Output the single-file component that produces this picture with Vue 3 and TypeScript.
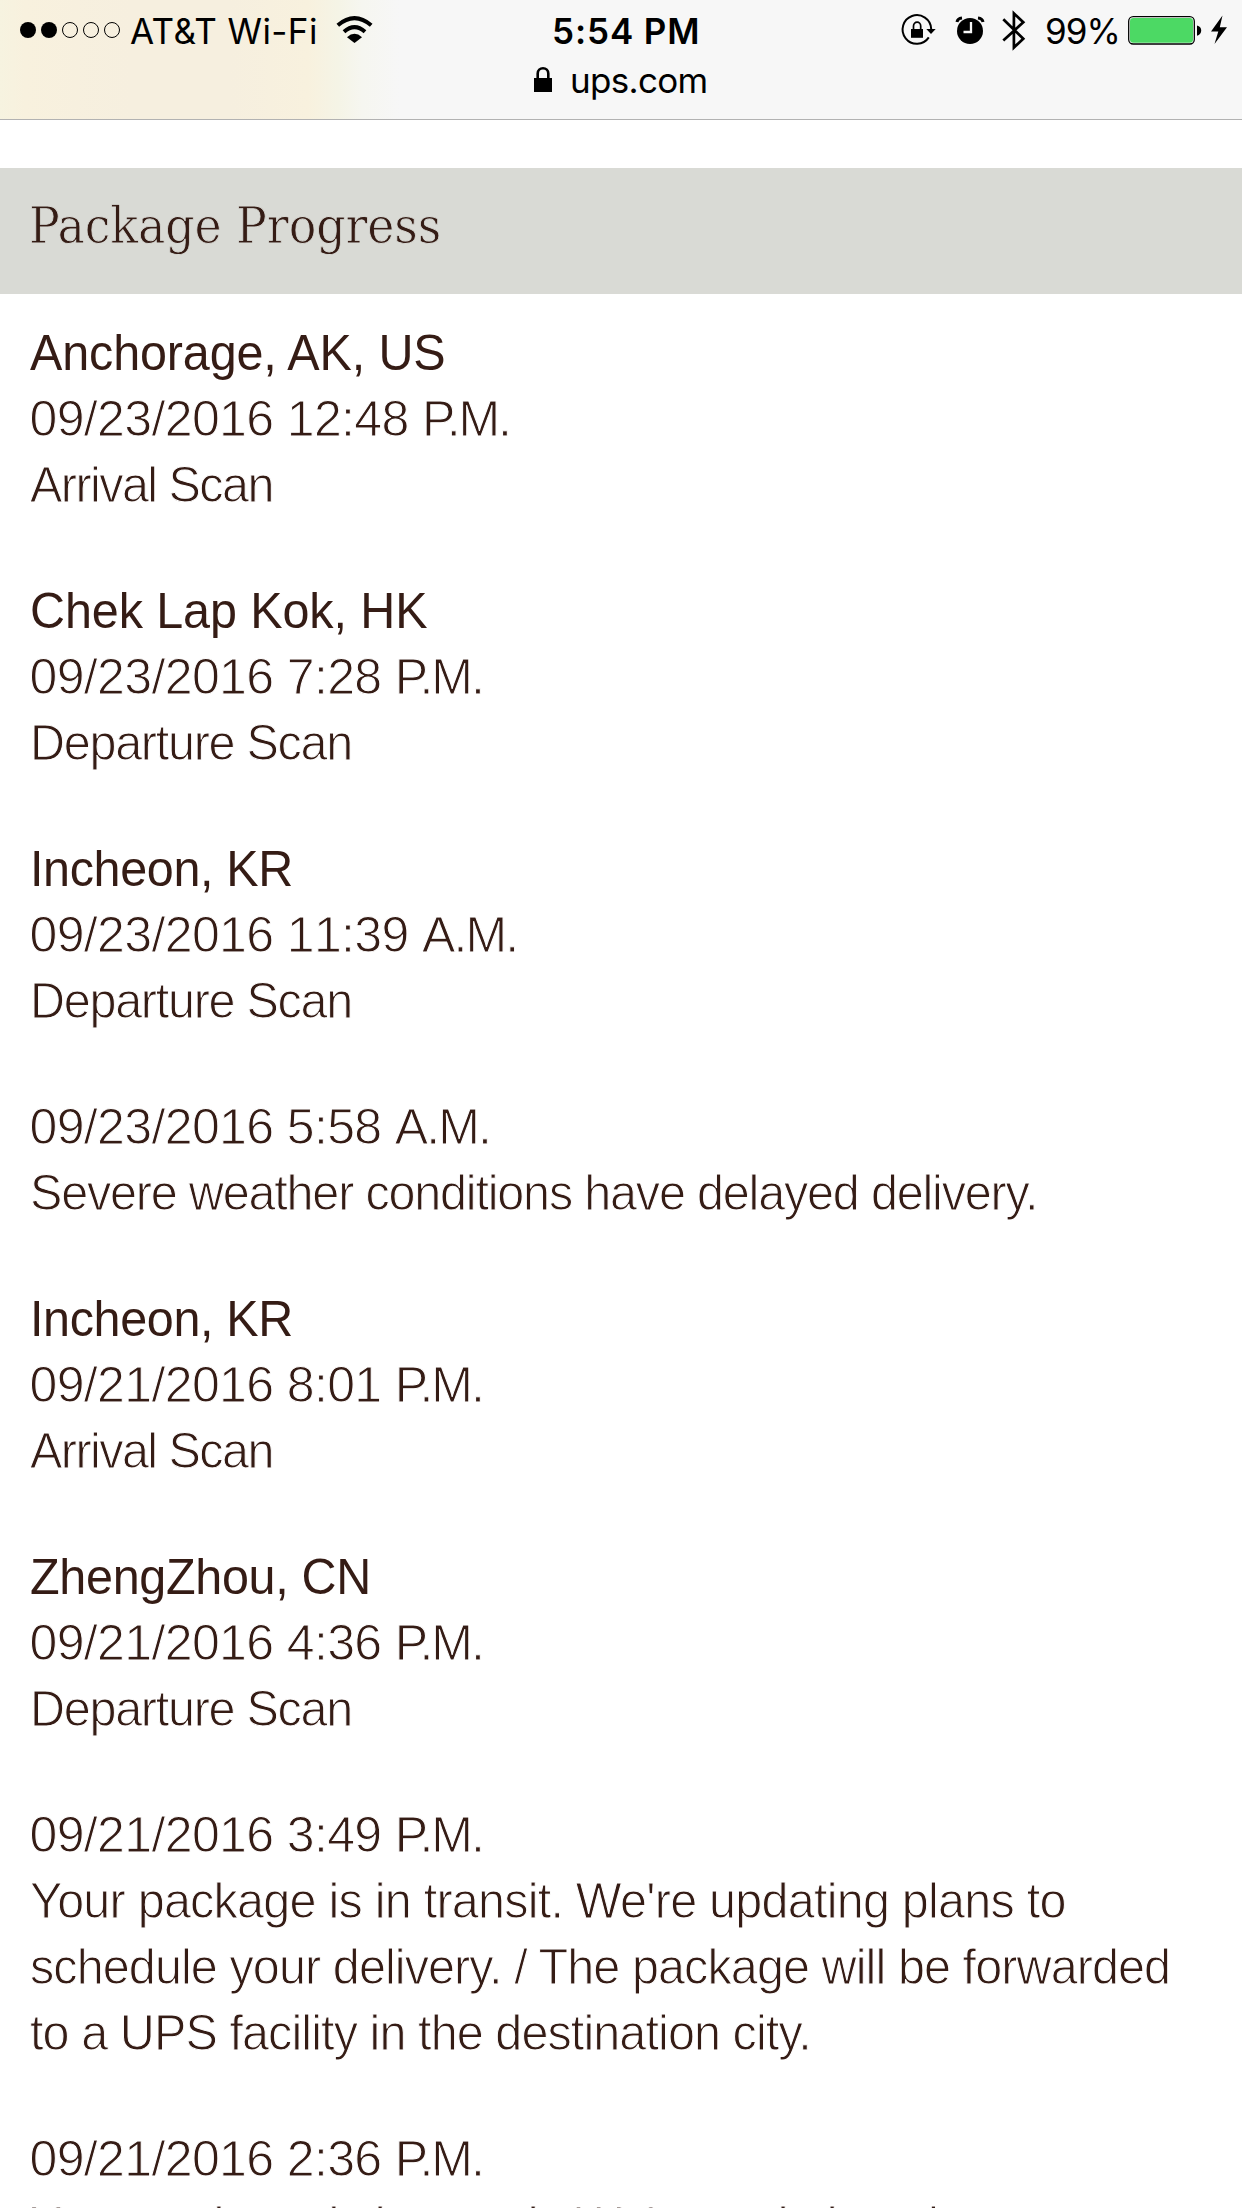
<script setup lang="ts">
interface TextLine {
  text: string
  tracking: number
}

interface ScanEvent {
  place?: TextLine
  date: string
  time: string
  meridiem: 'A.M.' | 'P.M.'
  details: TextLine[]
}

const arrival: TextLine = { text: 'Arrival Scan', tracking: -1.6 }
const departure: TextLine = { text: 'Departure Scan', tracking: -1.31 }
const incheon: TextLine = { text: 'Incheon, KR', tracking: -0.38 }
const inTransit: TextLine = { text: "Your package is in transit. We're updating plans to", tracking: -0.78 }

const events: ScanEvent[] = [
  {
    place: { text: 'Anchorage, AK, US', tracking: -0.14 },
    date: '09/23/2016',
    time: '12:48',
    meridiem: 'P.M.',
    details: [arrival],
  },
  {
    place: { text: 'Chek Lap Kok, HK', tracking: -0.1 },
    date: '09/23/2016',
    time: '7:28',
    meridiem: 'P.M.',
    details: [departure],
  },
  {
    place: incheon,
    date: '09/23/2016',
    time: '11:39',
    meridiem: 'A.M.',
    details: [departure],
  },
  {
    date: '09/23/2016',
    time: '5:58',
    meridiem: 'A.M.',
    details: [{ text: 'Severe weather conditions have delayed delivery.', tracking: -1.22 }],
  },
  {
    place: incheon,
    date: '09/21/2016',
    time: '8:01',
    meridiem: 'P.M.',
    details: [arrival],
  },
  {
    place: { text: 'ZhengZhou, CN', tracking: -0.32 },
    date: '09/21/2016',
    time: '4:36',
    meridiem: 'P.M.',
    details: [departure],
  },
  {
    date: '09/21/2016',
    time: '3:49',
    meridiem: 'P.M.',
    details: [
      inTransit,
      { text: 'schedule your delivery. / The package will be forwarded', tracking: -0.93 },
      { text: 'to a UPS facility in the destination city.', tracking: -0.93 },
    ],
  },
  {
    date: '09/21/2016',
    time: '2:36',
    meridiem: 'P.M.',
    details: [inTransit],
  },
]
</script>

<template>
  <div class="screen">
    <header class="chrome">
      <div class="status">
        <div class="group">
          <svg class="dots" width="100" height="20" viewBox="20 20 100 20">
            <circle cx="28" cy="30" r="8" />
            <circle cx="49" cy="30" r="8" />
            <g fill="none" stroke="#000" stroke-width="1">
              <circle cx="70" cy="30" r="7.5" />
              <circle cx="91" cy="30" r="7.5" />
              <circle cx="112" cy="30" r="7.5" />
            </g>
          </svg>
          <span class="carrier">AT&amp;T Wi-Fi</span>
          <svg width="40" height="60" viewBox="335 0 40 60">
            <g fill="none" stroke="#000" stroke-width="4">
              <path d="M337.8 25.3Q354.5 11 371.2 25.3" />
              <path d="M344 31.8Q354.5 22.5 365 31.8" />
            </g>
            <path d="M347 37.2Q354.5 30.5 362 37.2L354.5 43z" />
          </svg>
        </div>
        <div class="group">
          <span class="time">5:54 PM</span>
        </div>
        <div class="group">
          <svg width="140" height="60" viewBox="900 0 140 60">
            <path d="M928.8 37.4A14.3 14.3 0 1 1 931.2 29" fill="none" stroke="#000" stroke-width="2" />
            <path d="M926.3 29h9.4l-4.7 5z" />
            <path d="M911 29h12v8.8h-12z" />
            <path d="M913.5 30v-4a3.6 3.9 0 0 1 7.2 0v4" fill="none" stroke="#000" stroke-width="1.7" />
            <circle cx="970" cy="31" r="13" />
            <path d="M971 22v10h-7.5" fill="none" stroke="#f7f7f7" stroke-width="2.3" />
            <path d="M957 22Q957.5 18.5 962 18M983 22Q982.5 18.5 978 18" fill="none" stroke="#000" stroke-width="3" />
            <path d="M1003.3 19.2L1023.3 38.7L1013.9 47.6V13.4L1023.3 22.2L1003.3 40.6" fill="none" stroke="#000" stroke-width="2.7" />
          </svg>
          <span class="percent">99%</span>
          <svg width="104" height="60" viewBox="1126 0 104 60">
            <rect x="1128.7" y="16.7" width="65.6" height="27.3" rx="4.5" fill="#fff" stroke="#000" stroke-width="1.3" />
            <rect x="1130" y="18" width="63" height="24.7" rx="3.2" fill="#4cd964" />
            <path d="M1197 25.5q4.2 1 4.2 5t-4.2 5.2z" />
            <path d="M1222.5 15.5L1211 31.5h7.3L1214.5 44L1227 27.2h-7.2z" />
          </svg>
        </div>
      </div>
      <div class="address">
        <svg width="20" height="28" viewBox="533 66 20 28">
          <path d="M534 78h18v14h-18z" />
          <path d="M537.7 79v-5.5a5.3 5.3 0 0 1 10.6 0v5.5" fill="none" stroke="#000" stroke-width="2.6" />
        </svg>
        <span class="host">ups.com</span>
      </div>
    </header>

    <main>
      <h1 class="heading">Package Progress</h1>
      <section v-for="(event, i) in events" :key="i" class="event">
        <p v-if="event.place" class="place" :style="{ letterSpacing: event.place.tracking + 'px' }">{{ event.place.text }}</p>
        <p class="stamp">
          <span class="digits">{{ event.date }} {{ event.time }}&nbsp;</span><span :class="event.meridiem === 'P.M.' ? 'pm' : 'am'">{{ event.meridiem }}</span>
        </p>
        <p v-for="(line, j) in event.details" :key="j" class="detail" :style="{ letterSpacing: line.tracking + 'px' }">{{ line.text }}</p>
      </section>
    </main>
  </div>
</template>

<style>
body {
  margin: 0;
  background: #fff;
  overflow: hidden;
}
</style>

<style scoped>
.screen {
  width: 1242px;
  height: 2208px;
  overflow: hidden;
  background: #fff;
  color: #351c15;
  font-family: "Liberation Sans", Arial, sans-serif;
}

.chrome {
  box-sizing: border-box;
  height: 120px;
  border-bottom: 1px solid #b2b2b2;
  background: linear-gradient(90deg, #f6f3e0 0, #f8f1de 25px, #f6efdf 130px, #f6efdf 230px, #f8f1de 308px, #f5f4e6 338px, #f6f6f0 362px, #f7f7f7 400px);
  color: #000;
  font-family: Inter, sans-serif;
  font-size: 35px;
}

.status {
  display: grid;
  grid-template-columns: 552px 348px 342px;
  height: 60px;
}

.group {
  display: flex;
  align-items: center;
  height: 60px;
  white-space: nowrap;
}

svg {
  display: block;
  flex: none;
}

.dots {
  margin-left: 20px;
}

.carrier {
  width: 205px;
  margin-left: 10px;
  padding-top: 2px;
  letter-spacing: 0.4px;
}

.time {
  padding-top: 2px;
  font-weight: 600;
  letter-spacing: 0.9px;
}

.percent {
  width: 81px;
  margin-left: 5px;
  padding-top: 2px;
  letter-spacing: -1px;
}

.address {
  display: flex;
  align-items: flex-start;
  padding-left: 533px;
}

.address svg {
  margin-top: 6px;
}

.host {
  margin-left: 17px;
  line-height: 40px;
  letter-spacing: -0.7px;
}

.heading {
  height: 126px;
  margin: 48px 0 26px;
  padding-left: 29px;
  background: #d9dad5;
  font-family: "DejaVu Serif Condensed", "DejaVu Serif", serif;
  font-stretch: condensed;
  font-size: 51px;
  font-weight: 400;
  line-height: 115px;
  letter-spacing: -0.1px;
  white-space: nowrap;
  -webkit-text-stroke: 0.8px #d9dad5;
}

.event {
  margin: 0 0 60px 29.5px;
}

.place,
.stamp,
.detail {
  margin: 0;
  font-size: 50px;
  line-height: 66px;
  white-space: nowrap;
}

/* Slightly narrowed letterforms for place names and messages. */
.place,
.detail {
  transform: scaleX(0.97);
  transform-origin: left center;
}

/* A background-coloured outline slims the regular weight to a light one. */
.stamp,
.detail {
  -webkit-text-stroke: 1px #fff;
}

.digits {
  font-kerning: none;
  letter-spacing: -0.63px;
}

.pm {
  letter-spacing: -2.1px;
}

.am {
  letter-spacing: -1.9px;
}
</style>
